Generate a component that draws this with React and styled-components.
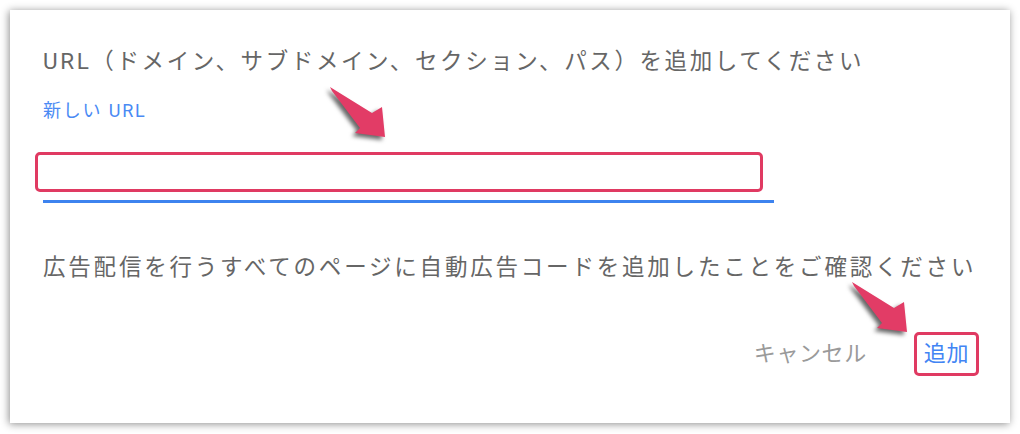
import React from "react";
import styled, { createGlobalStyle } from "styled-components";

const Global = createGlobalStyle`
  html, body { margin: 0; padding: 0; background: #fff; }
  body { font-family: Roboto, "Noto Sans CJK JP", sans-serif; }
`;

const Card = styled.div`
  position: relative;
  margin: 10px;
  width: 1000px;
  height: 413px;
  box-sizing: border-box;
  padding: 36px 31px 0 33px;
  background: #fff;
  box-shadow: -1px 1px 8px rgba(0, 0, 0, 0.45);
  display: flex;
  flex-direction: column;
`;

const Title = styled.h2`
  margin: 0;
  font-weight: 400;
  font-size: 22.5px;
  line-height: 30px;
  letter-spacing: 2.6px;
  color: #666;
  white-space: nowrap;
`;

const Label = styled.div`
  margin-top: 23px;
  font-size: 18px;
  line-height: 24px;
  letter-spacing: 1.8px;
  color: #4a8af4;
`;

const Field = styled.div`
  position: relative;
  margin-top: 29px;
  width: 731px;
  height: 48px;
  border-bottom: 3px solid #3d83ef;
`;

const Highlight = styled.div`
  position: absolute;
  left: -8px;
  top: 0;
  width: 728px;
  height: 40px;
  box-sizing: border-box;
  border: 3px solid #e03a62;
  border-radius: 5px;
`;

const Confirm = styled.p`
  margin: 49px 0 0;
  font-size: 22.5px;
  line-height: 30px;
  letter-spacing: 2.8px;
  color: #666;
  white-space: nowrap;
`;

const Actions = styled.div`
  margin-top: 50px;
  display: flex;
  justify-content: flex-end;
  align-items: center;
  gap: 47px;
`;

const TextButton = styled.button`
  background: none;
  font-family: inherit;
  font-size: 22px;
  line-height: 28px;
  letter-spacing: 0.6px;
  padding: 0 ${(p) => (p.$boxed ? "7px" : "0")};
  height: 44px;
  box-sizing: border-box;
  border: ${(p) => (p.$boxed ? "3px solid #e03a62" : "none")};
  border-radius: 5px;
  color: ${(p) => (p.$boxed ? "#4285f4" : "#9a9a9a")};
  cursor: pointer;
`;

const ArrowSvg = styled.svg`
  position: absolute;
  left: ${(p) => p.$x}px;
  top: ${(p) => p.$y}px;
  width: 80px;
  height: 70px;
  overflow: visible;
  filter: drop-shadow(-3px 3px 2px rgba(0, 0, 0, 0.6));
`;

const Arrow = ({ x, y }) => (
  <ArrowSvg $x={x} $y={y} viewBox="0 0 80 70">
    <polygon
      points="10,9 52,35 62,29 65,59 35,55 40,50 12,13"
      fill="#e23c66"
    />
  </ArrowSvg>
);

export default function App() {
  return (
    <>
      <Global />
      <Card>
        <Title>URL（ドメイン、サブドメイン、セクション、パス）を追加してください</Title>
        <Label>新しい URL</Label>
        <Field>
          <Highlight />
        </Field>
        <Confirm>広告配信を行うすべてのページに自動広告コードを追加したことをご確認ください</Confirm>
        <Actions>
          <TextButton>キャンセル</TextButton>
          <TextButton $boxed>追加</TextButton>
        </Actions>
        <Arrow x={310} y={68} />
        <Arrow x={832} y={263} />
      </Card>
    </>
  );
}
